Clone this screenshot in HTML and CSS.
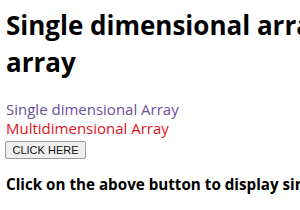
FILE: index.html
```html
<!DOCTYPE html>
<html lang="en">

<head>
  <meta charset="UTF-8">
  <title>Single dimensional array vs multidimensional array</title>
  <meta name="viewport" content="width=device-width, initial-scale=1.0">
  <link rel="stylesheet" href="styles.css">
</head>

<body>

  <div class="page">
    <h1>Single dimensional array vs multidimensional<br>array</h1>

    <div class="arrays">
      <div class="single">Single dimensional Array</div>
      <div class="multi">Multidimensional Array</div>
    </div>

    <button class="btn">CLICK HERE</button>

    <h3 class="note">Click on the above button to display single dimensional and multidimensional array</h3>
  </div>

</body>

</html>
```

FILE: styles.css
```css
* {
  box-sizing: border-box;
}

html,
body {
  margin: 0;
  overflow: hidden;
}

body {
  font-family: 'Open Sans', sans-serif;
  background: #fff;
  color: #000;
}

.page {
  width: 300px;
  height: 210px;
  padding: 7px 6px;
  overflow: hidden;
}

h1 {
  font-size: 26px;
  line-height: 37px;
  font-weight: bold;
  margin: 0;
  white-space: nowrap;
}

.arrays {
  margin-top: 19px;
  font-size: 15px;
  line-height: 18.5px;
}

.single {
  color: #6b4f9e;
}

.multi {
  color: #e0141e;
}

.btn {
  display: block;
  margin-top: 4px;
  margin-left: -1px;
  width: 81px;
  height: 18px;
  padding: 0;
  font-family: 'Liberation Sans', Arial, sans-serif;
  font-size: 11px;
  line-height: 16px;
  color: #111;
  background: #efefef;
  border: 1px solid #9a9a9a;
  border-radius: 2px;
}

.note {
  margin: 15px 0 0;
  font-size: 15.2px;
  line-height: 21px;
  white-space: nowrap;
}
```
